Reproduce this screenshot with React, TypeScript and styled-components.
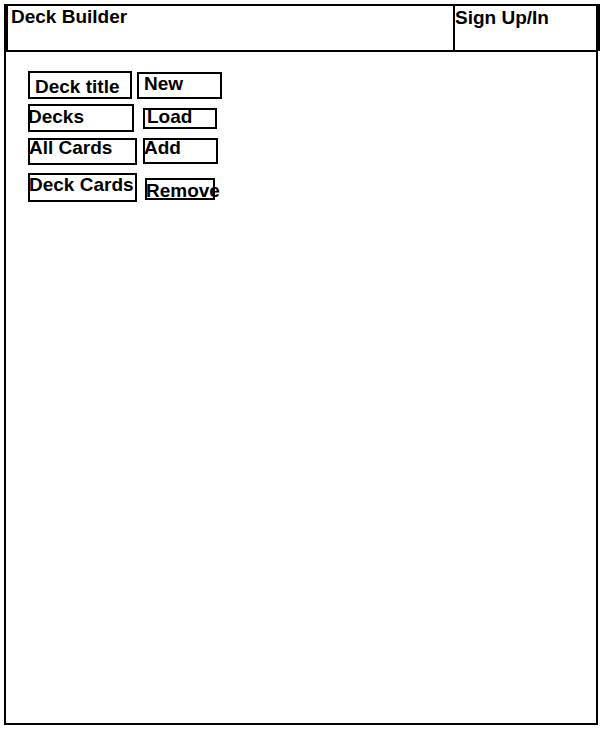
import styled, { createGlobalStyle } from 'styled-components';

const GlobalStyle = createGlobalStyle`
  html, body {
    margin: 0;
    padding: 0;
    background: #ffffff;
  }
  body {
    font-family: "Liberation Sans", Arial, Helvetica, sans-serif;
    color: #000;
  }
`;

const Page = styled.div`
  padding: 4px 0 0 4px;
`;

const Frame = styled.div`
  box-sizing: border-box;
  width: 594px;
  height: 721px;
  border: 2px solid #000;
  display: flex;
  flex-direction: column;
`;

const Header = styled.header`
  display: flex;
  height: 46px;
  box-sizing: border-box;
  border-bottom: 2px solid #000;
  border-left: 2px solid #000;
`;

const Title = styled.div`
  flex: 1;
  font-weight: bold;
  font-size: 19px;
  line-height: 19px;
  padding: 1px 0 0 3px;
`;

const SignUp = styled.div`
  box-sizing: border-box;
  width: 147px;
  margin: -2px -4px -1px 0;
  border-top: 2px solid #000;
  border-left: 2px solid #000;
  border-right: 3px solid #000;
  font-weight: bold;
  font-size: 19px;
  line-height: 19px;
  padding: 2px 0 0 0;
`;

const Content = styled.main`
  display: flex;
  flex-direction: column;
  padding: 19px 0 0 22px;
`;

const Row = styled.div<{ $top: number }>`
  display: flex;
  align-items: flex-start;
  margin-top: ${(p) => p.$top}px;
`;

const Box = styled.div<{ $w: number; $h: number; $dx?: number; $dy?: number }>`
  box-sizing: border-box;
  width: ${(p) => p.$w}px;
  height: ${(p) => p.$h}px;
  margin-left: ${(p) => p.$dx ?? 0}px;
  margin-top: ${(p) => p.$dy ?? 0}px;
  border: 2px solid #000;
  white-space: nowrap;
`;

const Label = styled.span<{ $x: number; $y: number }>`
  display: block;
  font-weight: bold;
  font-size: 19px;
  line-height: 19px;
  margin-left: ${(p) => p.$x}px;
  margin-top: ${(p) => p.$y}px;
`;

interface Cell {
  text: string;
  w: number;
  h: number;
  dx?: number;
  dy?: number;
  x: number;
  y: number;
}

const rows: { top: number; cells: Cell[] }[] = [
  {
    top: 0,
    cells: [
      { text: 'Deck title', w: 104, h: 28, x: 5, y: 4 },
      { text: 'New', w: 85, h: 27, dx: 5, dy: 1, x: 5, y: 0 },
    ],
  },
  {
    top: 5,
    cells: [
      { text: 'Decks', w: 106, h: 28, x: -2, y: 1 },
      { text: 'Load', w: 74, h: 21, dx: 9, dy: 4, x: 2, y: -3 },
    ],
  },
  {
    top: 6,
    cells: [
      { text: 'All Cards', w: 109, h: 27, x: -1, y: -2 },
      { text: 'Add', w: 75, h: 26, dx: 6, x: -1, y: -2 },
    ],
  },
  {
    top: 8,
    cells: [
      { text: 'Deck Cards', w: 109, h: 29, x: -1, y: 0 },
      { text: 'Remove', w: 70, h: 22, dx: 8, dy: 5, x: -1, y: 1 },
    ],
  },
];

const App = () => {
  return (
    <>
      <GlobalStyle />
      <Page>
        <Frame>
          <Header>
            <Title>Deck Builder</Title>
            <SignUp>Sign Up/In</SignUp>
          </Header>
          <Content>
            {rows.map((row, i) => (
              <Row $top={row.top} key={i}>
                {row.cells.map((c) => (
                  <Box $w={c.w} $h={c.h} $dx={c.dx} $dy={c.dy} key={c.text}>
                    <Label $x={c.x} $y={c.y}>{c.text}</Label>
                  </Box>
                ))}
              </Row>
            ))}
          </Content>
        </Frame>
      </Page>
    </>
  );
};

export default App;
